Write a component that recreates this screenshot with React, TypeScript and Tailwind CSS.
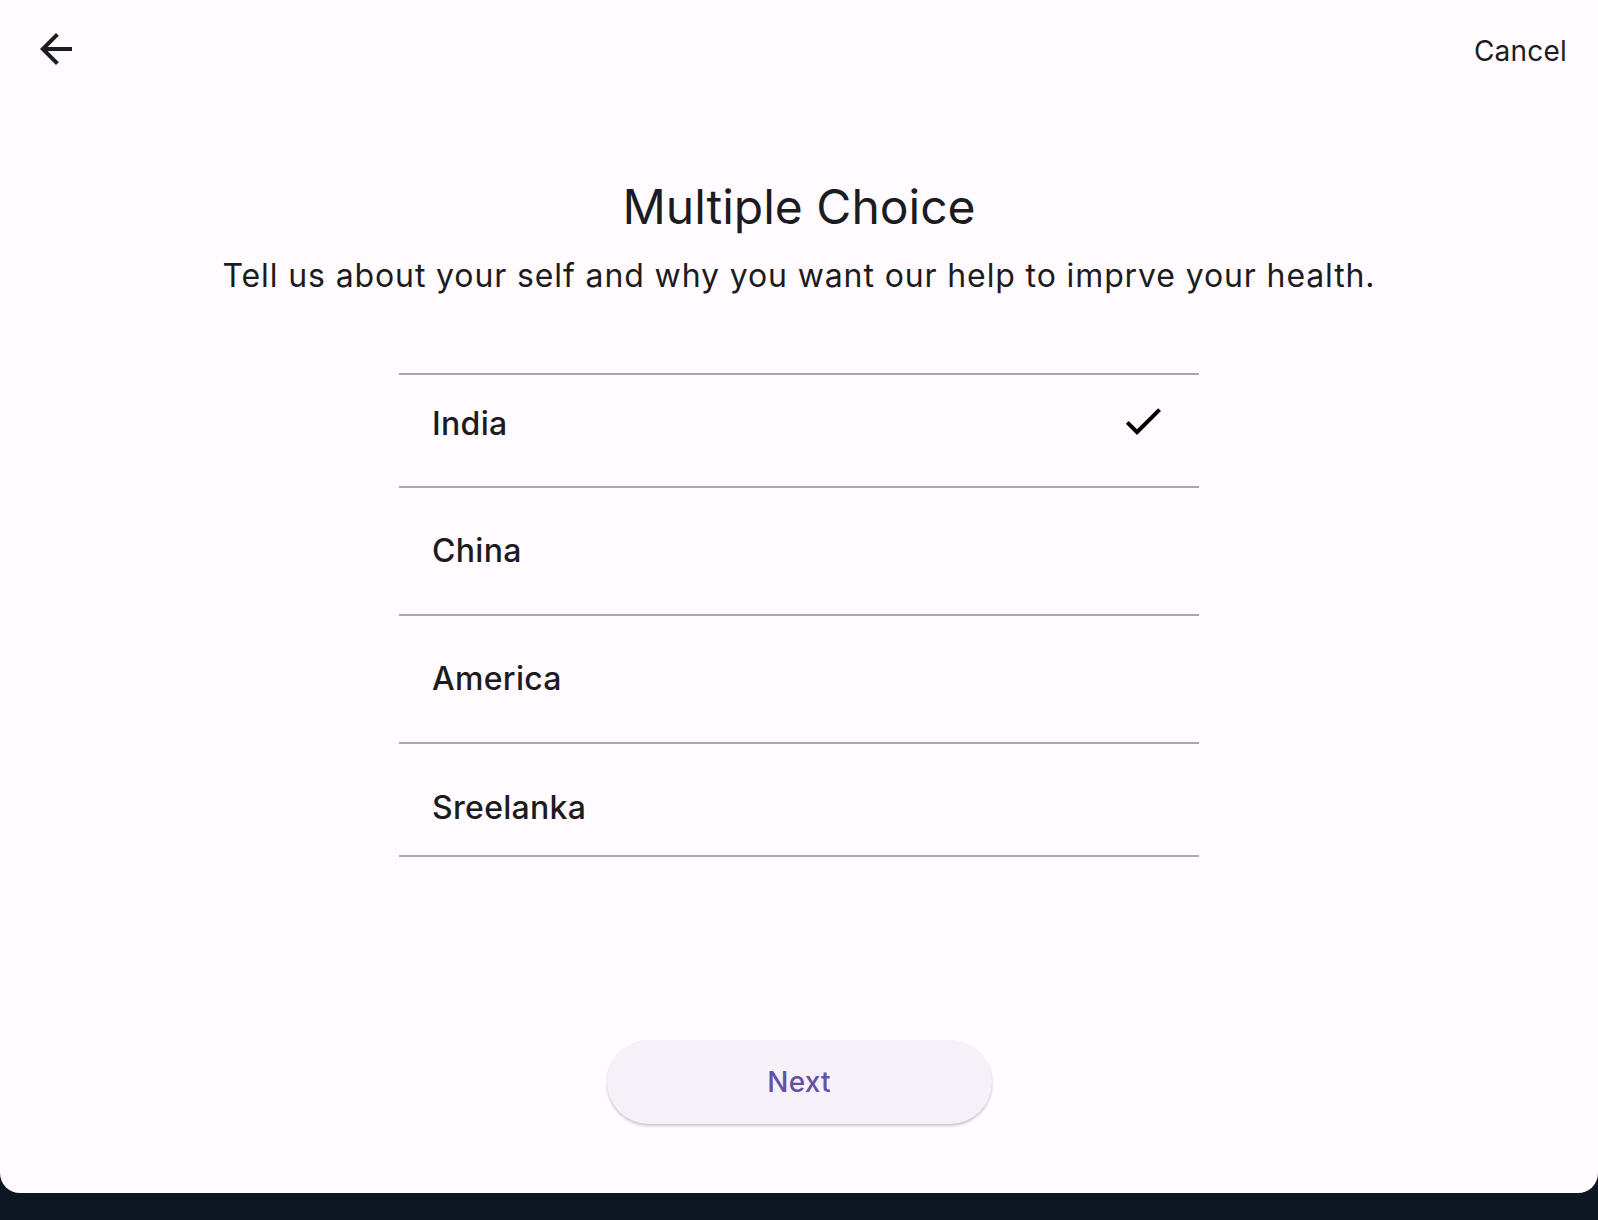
import React from "react";

const countries = ["India", "China", "America", "Sreelanka"];

const ArrowBack = () => (
  <svg viewBox="0 0 24 24" className="w-[48px] h-[48px]" fill="#1c1b1f">
    <path d="M20 11H7.83l5.59-5.59L12 4l-8 8 8 8 1.41-1.41L7.83 13H20v-2z" />
  </svg>
);

const Check = () => (
  <svg viewBox="0 0 24 24" className="w-[48px] h-[48px] mb-[5px]" fill="#000">
    <path d="M9 16.17L4.83 12l-1.42 1.41L9 19 21 7l-1.41-1.41z" />
  </svg>
);

const App = () => {
  const selected = "India";
  return (
    <div
      className="bg-[#0c1722] h-[1220px] w-full"
      style={{ fontFamily: "Inter, 'Noto Sans', sans-serif" }}
    >
      <div className="bg-[#fffbfe] h-[1193px] rounded-b-[20px] flex flex-col text-[#1c1b1f]">
        {/* top bar */}
        <div className="flex justify-between items-start pl-[32px] pr-[31px] pt-[25px]">
          <button className="w-[48px] h-[48px]">
            <ArrowBack />
          </button>
          <span className="text-[28px] leading-[36px] tracking-[0.2px] mt-[8px]">
            Cancel
          </span>
        </div>

        <h1 className="text-[48px] leading-[56px] text-center mt-[106px]">
          Multiple Choice
        </h1>
        <p className="text-[32px] leading-[40px] text-center tracking-[0.88px] mt-[21px]">
          Tell us about your self and why you want our help to imprve your health.
        </p>

        {/* options */}
        <div className="w-[800px] mx-auto mt-[77px] border-t-2 border-[#a8a8a8]">
          {countries.map((c, i) => {
            const pad =
              i === 0
                ? "h-[113px] pb-[14px]"
                : i === countries.length - 1
                ? "h-[113px] pt-[16px]"
                : "h-[128px]";
            return (
              <div
                key={c}
                className={`flex items-center justify-between pl-[33px] pr-[32px] border-b-2 border-[#a8a8a8] ${pad}`}
              >
                <span className="text-[32px] font-medium tracking-[0.3px] leading-[40px]">
                  {c}
                </span>
                {c === selected && <Check />}
              </div>
            );
          })}
        </div>

        <div className="flex-1 flex items-end justify-center pb-[69px]">
          <button className="w-[385px] h-[84px] rounded-full bg-[#f4f2f8] shadow-[0_2px_3px_rgba(0,0,0,0.22)] text-[28px] font-medium text-[#6750a4] tracking-[0.2px]">
            Next
          </button>
        </div>
      </div>
    </div>
  );
};

export default App;
